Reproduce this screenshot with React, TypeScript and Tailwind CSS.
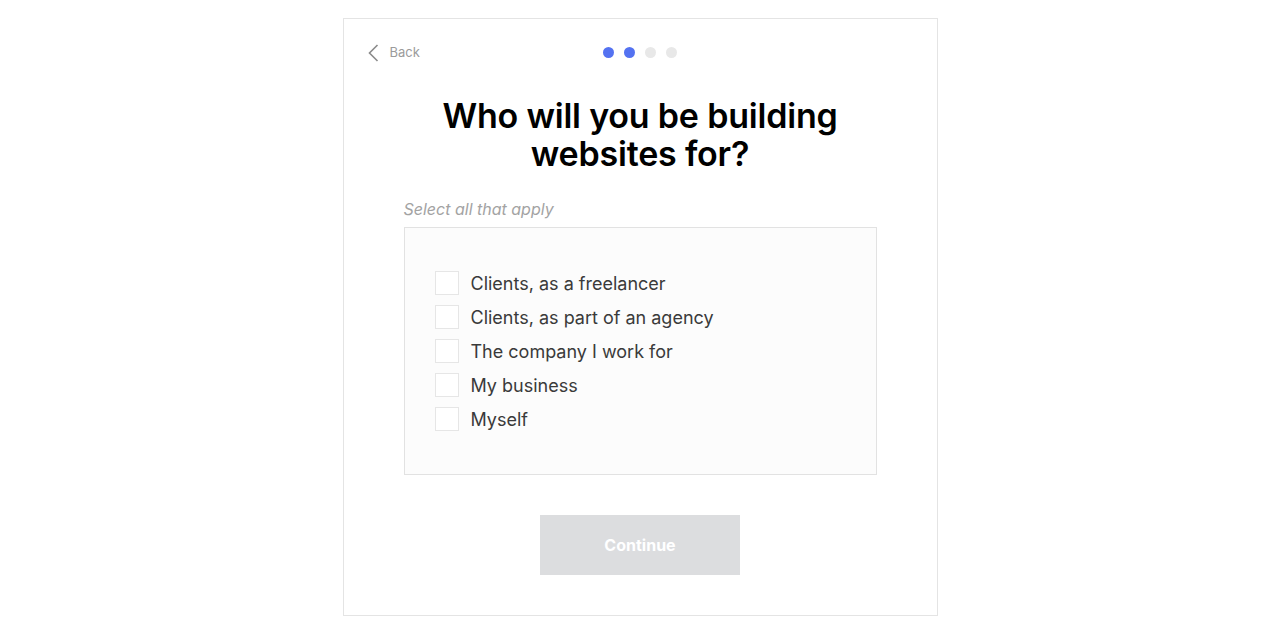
const options = [
  "Clients, as a freelancer",
  "Clients, as part of an agency",
  "The company I work for",
  "My business",
  "Myself",
]

export default function App() {
  return (
    <div className="min-h-[634px] bg-white pt-[18px] font-['Inter',sans-serif]">
      <div className="mx-auto h-[598px] w-[595px] border border-[#e4e4e4] bg-white">
        {/* Top bar */}
        <div className="relative flex h-[68px] items-center pl-[24px]">
          <button className="flex items-center gap-[11px] text-[13px] text-[#9b9b9b]">
            <svg width="11" height="18" viewBox="0 0 11 18" fill="none">
              <path d="M9.5 1 L1.5 9 L9.5 17" stroke="#8a8a8a" strokeWidth="1.6" />
            </svg>
            Back
          </button>
          <div className="absolute left-1/2 top-[28px] flex -translate-x-1/2 gap-[10px]">
            <span className="h-[11px] w-[11px] rounded-full bg-[#5472f1]" />
            <span className="h-[11px] w-[11px] rounded-full bg-[#5472f1]" />
            <span className="h-[11px] w-[11px] rounded-full bg-[#e8e8e8]" />
            <span className="h-[11px] w-[11px] rounded-full bg-[#e8e8e8]" />
          </div>
        </div>

        <h1 className="mt-[10px] text-center text-[34px] font-semibold leading-[38px] tracking-[-0.2px] text-black">
          Who will you be building
          <br />
          websites for?
        </h1>

        <div className="mx-auto mt-[24px] w-[473px]">
          <p className="text-[16px] italic text-[#a3a3a3]">Select all that apply</p>
          <div className="mt-[6px] flex h-[248px] flex-col justify-center gap-[8px] border border-[#e2e2e2] bg-[#fcfcfc] pl-[30px]">
            {options.map((label) => (
              <label key={label} className="flex h-[26px] cursor-pointer items-center gap-[12px]">
                <span className="h-[24px] w-[24px] border border-[#e6e6e6] bg-white" />
                <span className="text-[18px] text-[#3a3a3a]">{label}</span>
              </label>
            ))}
          </div>
        </div>

        <div className="mt-[40px] flex justify-center">
          <button className="h-[60px] w-[200px] bg-[#dcdddf] text-[16px] font-bold text-white">
            Continue
          </button>
        </div>
      </div>
    </div>
  )
}
